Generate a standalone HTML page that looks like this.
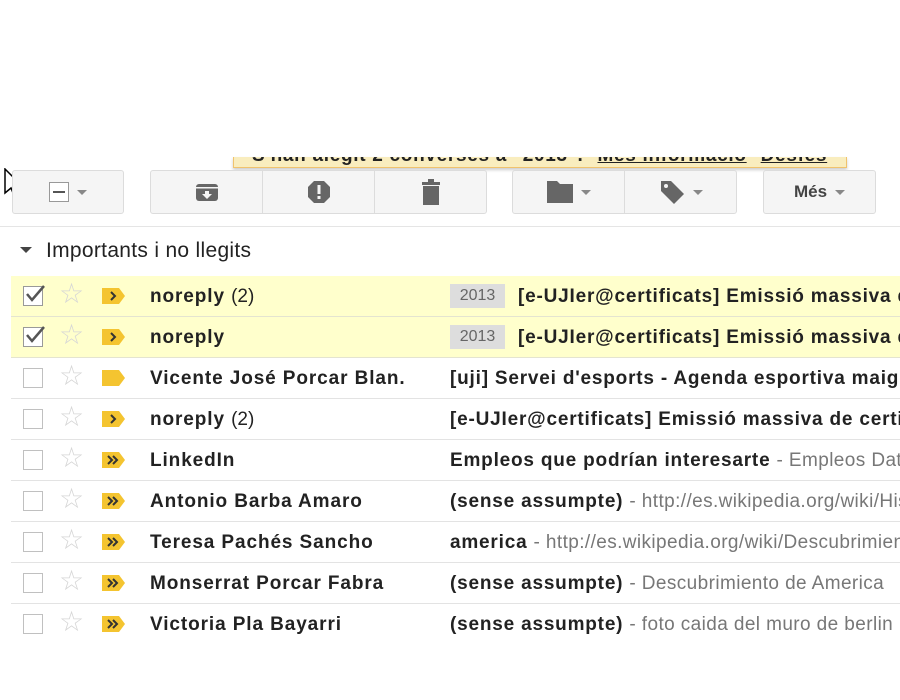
<!DOCTYPE html>
<html><head><meta charset="utf-8"><style>
*{margin:0;padding:0;box-sizing:border-box}
body{width:900px;height:700px;background:#fff;font-family:"Liberation Sans",Arial,sans-serif;position:relative;overflow:hidden}
.abs{position:absolute}
.notif{left:233px;top:157px;width:614px;height:11px;background:#f9edbe;border:1px solid #f0c36d;border-top:none;overflow:hidden;box-shadow:0 2px 3px rgba(0,0,0,.2)}
.notif div{position:absolute;left:18px;top:-12px;font-weight:bold;font-size:19px;color:#222;white-space:nowrap;letter-spacing:.7px}
.notif u{margin-left:8px}
.btn{top:170px;height:44px;background:#f5f5f5;border:1px solid #dcdcdc;border-radius:3px;display:flex}
.seg{flex:1;display:flex;align-items:center;justify-content:center;border-left:1px solid #dcdcdc}
.seg:first-child{border-left:none}
.dd{width:0;height:0;border-left:5px solid transparent;border-right:5px solid transparent;border-top:5px solid #888;margin-left:8px}
.hr{left:0;top:226px;width:900px;height:1px;background:#e5e5e5}
.sec{left:46px;top:239px;font-size:21px;color:#222;letter-spacing:.3px}
.tri{left:20px;top:247px;border-left:6px solid transparent;border-right:6px solid transparent;border-top:6px solid #444;width:0;height:0}
.row{position:absolute;left:11px;width:889px;height:41px;border-bottom:1px solid #e3e3e3;font-size:19px;color:#222;white-space:nowrap;overflow:hidden}
.row.sel{background:#ffffcc;border-bottom-color:#e4e4d0}
.cb{position:absolute;left:12px;top:10px;width:20px;height:20px;border:1px solid #c0c0c0;background:#fff}
.sel .cb{border-color:#999}
.star{position:absolute;left:48px;top:4px;font-size:28px;color:#d6d6d6;line-height:1}
.lab{position:absolute;left:91px;top:12px}
.name{position:absolute;left:139px;top:10px;font-weight:bold;letter-spacing:.9px}
.name span{font-weight:normal;letter-spacing:0}
.subj{position:absolute;left:439px;top:10px;font-weight:bold;letter-spacing:.8px}
.subj span{font-weight:normal;color:#777;letter-spacing:.4px}
.badge{position:absolute;left:439px;top:8px;width:55px;height:24px;background:#ddd;color:#666;font-size:16px;text-align:center;line-height:24px;letter-spacing:0}
.subj.b{left:507px}
</style></head><body>
<svg class="abs" style="left:4px;top:168px" width="22" height="34" viewBox="0 0 22 34"><path d="M1 1 L1 25 L7 20 L11 30 L15 28 L11 19 L19 19 Z" fill="#fff" stroke="#000" stroke-width="1.5"/></svg>
<div class="abs notif"><div>S'han alegit 2 converses a "2013". <u>Més informació</u> <u>Desfés</u></div></div>

<div class="abs btn" style="left:12px;width:112px"><div class="seg"><div style="width:20px;height:20px;border:1px solid #999;background:#fff;position:relative"><div style="position:absolute;left:3px;top:8px;width:12px;height:2px;background:#555"></div></div><div class="dd"></div></div></div>
<div class="abs btn" style="left:150px;width:337px">
<div class="seg"><svg width="24" height="20" viewBox="0 0 24 20"><rect x="1" y="2" width="22" height="17" rx="3" fill="#666"/><rect x="1" y="5" width="22" height="1.5" fill="#f5f5f5"/><path d="M10 9h4v3h-4z M7 12h10l-5 5z" fill="#f5f5f5"/></svg></div>
<div class="seg"><svg width="24" height="24" viewBox="0 0 24 24"><path d="M7 1h10l6 6v10l-6 6H7l-6-6V7z" fill="#666"/><rect x="10.5" y="5" width="3" height="9" fill="#f5f5f5"/><rect x="10.5" y="16" width="3" height="3" fill="#f5f5f5"/></svg></div>
<div class="seg"><svg width="20" height="26" viewBox="0 0 20 26"><rect x="7" y="0" width="6" height="3" fill="#666"/><rect x="1" y="3" width="18" height="3" fill="#666"/><rect x="2" y="7" width="16" height="19" fill="#666"/></svg></div>
</div>
<div class="abs btn" style="left:512px;width:225px">
<div class="seg"><svg width="26" height="22" viewBox="0 0 26 22"><path d="M0 0h10l3 3h13v19H0z" fill="#666"/></svg><div class="dd"></div></div>
<div class="seg"><svg width="26" height="26" viewBox="0 0 26 26"><path d="M2 2h10l13 13-10 10L2 12z" fill="#666"/><circle cx="7" cy="7" r="2" fill="#f5f5f5"/></svg><div class="dd"></div></div>
</div>
<div class="abs btn" style="left:763px;width:113px"><div class="seg" style="font-weight:bold;font-size:17px;color:#444">Més<div class="dd"></div></div></div>

<div class="abs hr"></div>
<div class="abs tri"></div>
<div class="abs sec">Importants i no llegits</div>

<div class="row sel" style="top:276px"><div class="cb"></div><svg class="abs" style="left:13px;top:8px" width="22" height="20"><path d="M3 10 L8 16 L20 2" stroke="#555" stroke-width="2.5" fill="none"/></svg><div class="star">☆</div><svg class="lab" width="24" height="16"><path d="M0 0h17l6 8-6 8H0z" fill="#f4c430"/><path d="M9 4l4 4-4 4" stroke="#333" stroke-width="2" fill="none"/></svg><div class="name">noreply <span>(2)</span></div><div class="badge">2013</div><div class="subj b">[e-UJIer@certificats] Emissió massiva de certificats</div></div>
<div class="row sel" style="top:317px"><div class="cb"></div><svg class="abs" style="left:13px;top:8px" width="22" height="20"><path d="M3 10 L8 16 L20 2" stroke="#555" stroke-width="2.5" fill="none"/></svg><div class="star">☆</div><svg class="lab" width="24" height="16"><path d="M0 0h17l6 8-6 8H0z" fill="#f4c430"/><path d="M9 4l4 4-4 4" stroke="#333" stroke-width="2" fill="none"/></svg><div class="name">noreply</div><div class="badge">2013</div><div class="subj b">[e-UJIer@certificats] Emissió massiva de certificats</div></div>
<div class="row" style="top:358px"><div class="cb"></div><div class="star">☆</div><svg class="lab" width="24" height="16"><path d="M0 0h17l6 8-6 8H0z" fill="#f4c430"/></svg><div class="name">Vicente José Porcar Blan.</div><div class="subj">[uji] Servei d'esports - Agenda esportiva maig</div></div>
<div class="row" style="top:399px"><div class="cb"></div><div class="star">☆</div><svg class="lab" width="24" height="16"><path d="M0 0h17l6 8-6 8H0z" fill="#f4c430"/><path d="M9 4l4 4-4 4" stroke="#333" stroke-width="2" fill="none"/></svg><div class="name">noreply <span>(2)</span></div><div class="subj">[e-UJIer@certificats] Emissió massiva de certificats</div></div>
<div class="row" style="top:440px"><div class="cb"></div><div class="star">☆</div><svg class="lab" width="24" height="16"><path d="M0 0h17l6 8-6 8H0z" fill="#f4c430"/><path d="M6 4l4 4-4 4M11 4l4 4-4 4" stroke="#333" stroke-width="2" fill="none"/></svg><div class="name">LinkedIn</div><div class="subj">Empleos que podrían interesarte <span>- Empleos Data</span></div></div>
<div class="row" style="top:481px"><div class="cb"></div><div class="star">☆</div><svg class="lab" width="24" height="16"><path d="M0 0h17l6 8-6 8H0z" fill="#f4c430"/><path d="M6 4l4 4-4 4M11 4l4 4-4 4" stroke="#333" stroke-width="2" fill="none"/></svg><div class="name">Antonio Barba Amaro</div><div class="subj">(sense assumpte) <span>- http://es.wikipedia.org/wiki/Historia</span></div></div>
<div class="row" style="top:522px"><div class="cb"></div><div class="star">☆</div><svg class="lab" width="24" height="16"><path d="M0 0h17l6 8-6 8H0z" fill="#f4c430"/><path d="M6 4l4 4-4 4M11 4l4 4-4 4" stroke="#333" stroke-width="2" fill="none"/></svg><div class="name">Teresa Pachés Sancho</div><div class="subj">america <span>- http://es.wikipedia.org/wiki/Descubrimiento</span></div></div>
<div class="row" style="top:563px"><div class="cb"></div><div class="star">☆</div><svg class="lab" width="24" height="16"><path d="M0 0h17l6 8-6 8H0z" fill="#f4c430"/><path d="M6 4l4 4-4 4M11 4l4 4-4 4" stroke="#333" stroke-width="2" fill="none"/></svg><div class="name">Monserrat Porcar Fabra</div><div class="subj">(sense assumpte) <span>- Descubrimiento de America</span></div></div>
<div class="row" style="top:604px;border-bottom:none"><div class="cb"></div><div class="star">☆</div><svg class="lab" width="24" height="16"><path d="M0 0h17l6 8-6 8H0z" fill="#f4c430"/><path d="M6 4l4 4-4 4M11 4l4 4-4 4" stroke="#333" stroke-width="2" fill="none"/></svg><div class="name">Victoria Pla Bayarri</div><div class="subj">(sense assumpte) <span>- foto caida del muro de berlin</span></div></div>
</body></html>
